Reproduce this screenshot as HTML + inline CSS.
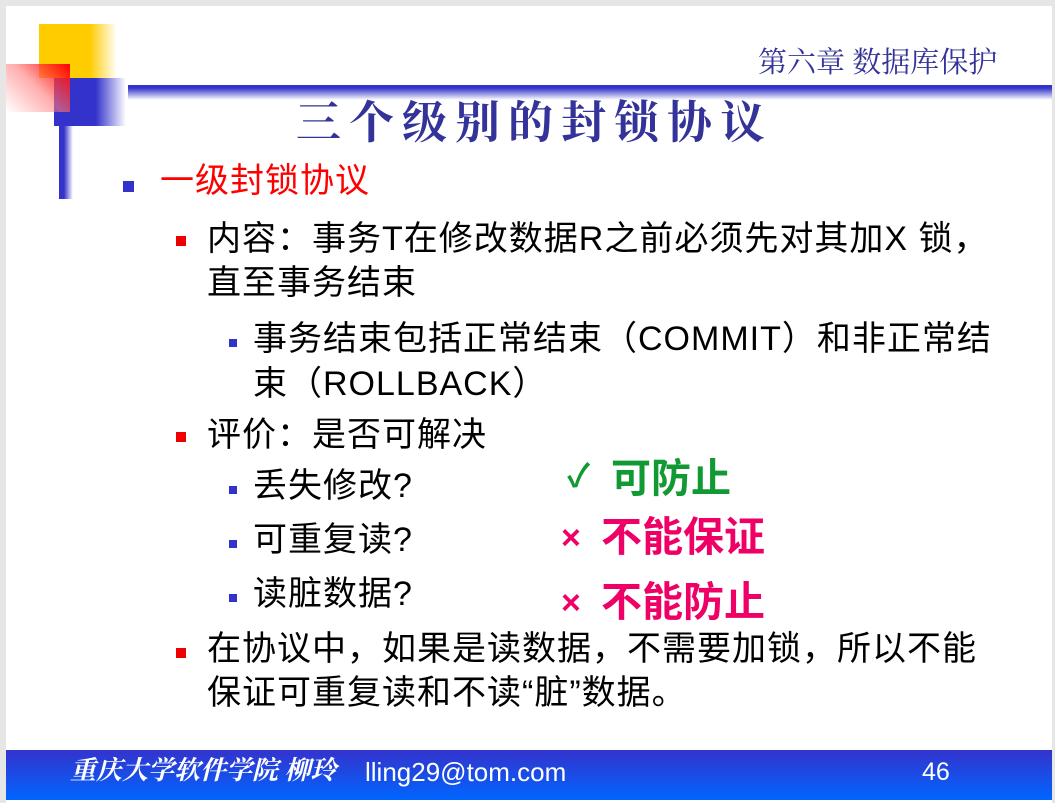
<!DOCTYPE html>
<html><head><meta charset="utf-8"><style>
body{margin:0;width:1055px;height:803px;background:#e6e6e6;position:relative;overflow:hidden;font-family:"Liberation Sans","Noto Sans CJK SC",sans-serif}
.slide{position:absolute;left:6px;top:6px;width:1046px;height:797px;background:#fff}
.a{position:absolute;white-space:nowrap;line-height:1}
.t{font-size:34px;letter-spacing:1px;color:#000}
.rb{position:absolute;width:10px;height:10px;background:#e00}
.bb{position:absolute;width:8px;height:8px;background:#3333cc}
</style></head><body>
<div class="slide"></div>
<div class="a" style="left:39px;top:24px;width:78px;height:54px;background:linear-gradient(90deg,#ffcc00 0,#ffcc00 65%,rgba(255,204,0,0) 100%)"></div>
<div class="a" style="left:54px;top:78px;width:72px;height:48px;background:linear-gradient(90deg,#3333cc 0,#3333cc 58%,rgba(51,51,204,0) 100%)"></div>
<div class="a" style="left:6px;top:64px;width:64px;height:48px;background:linear-gradient(225deg,#ff0000 0,rgba(255,120,120,.6) 50%,rgba(255,255,255,0) 100%)"></div>
<div class="a" style="left:59px;top:126px;width:14px;height:73px;background:linear-gradient(90deg,#3333cc 0,#3333cc 35%,rgba(51,51,204,0) 100%)"></div>
<div class="a" style="left:128px;top:85px;width:924px;height:15px;background:linear-gradient(180deg,#3333cc 0,#3333cc 20%,rgba(51,51,204,0) 100%)"></div>
<div class="a" style="left:758px;top:49px;font-size:29px;color:#333399;font-family:'Liberation Serif','Noto Serif CJK SC',serif">第六章 数据库保护</div>
<div class="a" style="left:296px;top:101px;font-size:45px;font-weight:bold;color:#333399;letter-spacing:8px;font-family:'Liberation Serif','Noto Serif CJK SC',serif">三个级别的封锁协议</div>
<div class="a" style="left:123px;top:181px;width:11px;height:11px;background:#3333cc"></div>
<div class="a" style="left:160px;top:164px;font-size:34px;letter-spacing:1px;color:#ff0000">一级封锁协议</div>
<div class="rb" style="left:176px;top:236px"></div>
<div class="a t" style="left:207px;top:222px">内容：事务T在修改数据R之前必须先对其加X 锁，</div>
<div class="a t" style="left:207px;top:266px">直至事务结束</div>
<div class="bb" style="left:229px;top:339px"></div>
<div class="a t" style="left:253px;top:322px">事务结束包括正常结束（COMMIT）和非正常结</div>
<div class="a t" style="left:253px;top:367px">束（ROLLBACK）</div>
<div class="rb" style="left:176px;top:432px"></div>
<div class="a t" style="left:207px;top:418px">评价：是否可解决</div>
<div class="bb" style="left:229px;top:486px"></div>
<div class="a t" style="left:253px;top:469px">丢失修改?</div>
<div class="bb" style="left:229px;top:540px"></div>
<div class="a t" style="left:253px;top:523px">可重复读?</div>
<div class="bb" style="left:229px;top:594px"></div>
<div class="a t" style="left:253px;top:577px">读脏数据?</div>
<div class="a" style="left:567px;top:460px;font-size:32px;font-weight:bold;color:#119933">✓</div>
<div class="a" style="left:611px;top:459px;font-size:40px;font-weight:bold;color:#119933">可防止</div>
<div class="a" style="left:561px;top:521px;font-size:34px;font-weight:bold;color:#ee0066">×</div>
<div class="a" style="left:601px;top:517px;font-size:41px;font-weight:bold;color:#ee0066">不能保证</div>
<div class="a" style="left:561px;top:586px;font-size:34px;font-weight:bold;color:#ee0066">×</div>
<div class="a" style="left:601px;top:582px;font-size:41px;font-weight:bold;color:#ee0066">不能防止</div>
<div class="rb" style="left:176px;top:648px"></div>
<div class="a t" style="left:207px;top:632px">在协议中，如果是读数据，不需要加锁，所以不能</div>
<div class="a t" style="left:207px;top:676px">保证可重复读和不读“脏”数据。</div>
<div class="a" style="left:6px;top:750px;width:1046px;height:50px;background:linear-gradient(180deg,#3333cc,#0066ff)"></div>
<div class="a" style="left:70px;top:758px;font-size:26px;color:#fff;font-style:italic;font-weight:bold;font-family:'Liberation Serif','Noto Serif CJK SC',serif">重庆大学软件学院 柳玲</div>
<div class="a" style="left:365px;top:759px;font-size:26px;color:#fff">lling29@tom.com</div>
<div class="a" style="left:922px;top:760px;font-size:25px;color:#fff">46</div>
</body></html>
